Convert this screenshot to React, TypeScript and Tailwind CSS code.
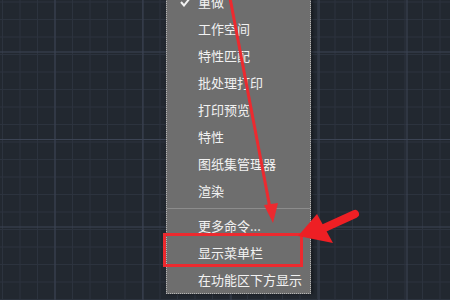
import React from 'react';

const topItems = ['重做', '工作空间', '特性匹配', '批处理打印', '打印预览', '特性', '图纸集管理器', '渲染'];
const bottomItems = ['更多命令...', '显示菜单栏', '在功能区下方显示'];

function GridCanvas() {
  const minor: number[] = [];
  for (let i = -3; i < 30; i++) minor.push(2.5 + i * 17.5);
  const majorX = [55, 143, 231, 319, 407];
  const majorY = [52, 139.5, 227];
  return (
    <svg className="absolute inset-0" width="450" height="300">
      <rect width="450" height="300" fill="#222830" />
      {minor.map((p) => (
        <g key={p}>
          <line x1={p} y1="0" x2={p} y2="300" stroke="#2c333e" strokeWidth="1" />
          <line x1="0" y1={p - 0.5} x2="450" y2={p - 0.5} stroke="#2c333e" strokeWidth="1" />
        </g>
      ))}
      {majorX.map((x) => (
        <line key={'x' + x} x1={x} y1="0" x2={x} y2="300" stroke="#3c4454" strokeWidth="1" />
      ))}
      {majorY.map((y) => (
        <line key={'y' + y} x1="0" y1={y} x2="450" y2={y} stroke="#3c4454" strokeWidth="1" />
      ))}
    </svg>
  );
}

function MenuItem({ label, checked }: { label: string; checked?: boolean }) {
  return (
    <div className="relative h-[27px] flex items-center pl-[31px] text-[13px] leading-none text-[#f2f2f2]">
      {checked && (
        <svg className="absolute left-[13px] top-[9px]" width="11" height="10" viewBox="0 0 11 10">
          <path d="M1 5 L4 8.5 L10 1" fill="none" stroke="#f2f2f2" strokeWidth="2" />
        </svg>
      )}
      {label}
    </div>
  );
}

export default function App() {
  return (
    <div
      className="relative w-[450px] h-[300px] overflow-hidden"
      style={{ fontFamily: '"Noto Sans CJK SC", "Noto Sans", sans-serif' }}
    >
      <GridCanvas />

      <div className="absolute left-[166px] top-[-13px] w-[145px] h-[307px] bg-[#6e6e6e] border border-dotted border-[#b4b4b4] shadow-[2px_0_3px_rgba(0,0,0,0.35)]">
        {topItems.map((t, i) => (
          <MenuItem key={t} label={t} checked={i === 0} />
        ))}
        <div className="mt-[4px] h-px bg-[#8c8c8c]" />
        <div className="mt-[3px]">
          {bottomItems.map((t) => (
            <MenuItem key={t} label={t} />
          ))}
        </div>
      </div>

      <div className="absolute left-[163px] top-[233px] w-[140px] h-[34px] border-[3px] border-[#ec2a2f]" />

      <svg className="absolute inset-0 pointer-events-none" width="450" height="300">
        <line x1="230" y1="-2" x2="270" y2="208" stroke="#ec2a2f" strokeWidth="3" />
        <polygon points="264,205 278,203 273,223" fill="#ec2a2f" />
        <line x1="322" y1="229" x2="355" y2="214" stroke="#ee1f24" strokeWidth="8" strokeLinecap="round" />
        <polygon points="298,236 317,214 333,243" fill="#ee1f24" />
      </svg>
    </div>
  );
}
